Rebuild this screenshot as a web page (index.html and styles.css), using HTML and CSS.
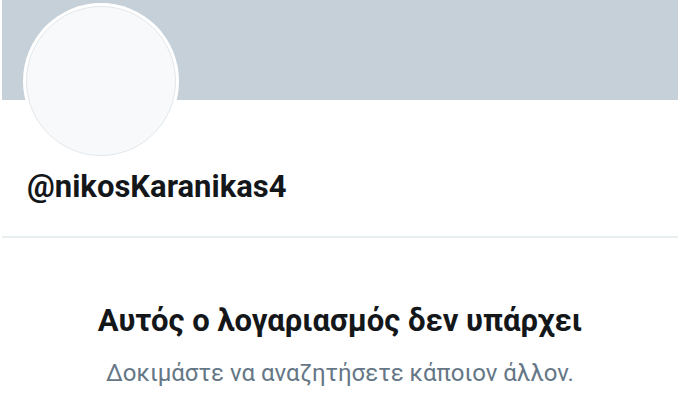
FILE: index.html
```html
<!DOCTYPE html>
<html lang="el">
<head>
    <meta charset="UTF-8">
    <meta name="viewport" content="width=device-width, initial-scale=1.0">
    <title>@nikosKaranikas4</title>
    <link rel="stylesheet" href="styles.css">
</head>
<body>

<div class="profile">
    <div class="banner"></div>
    <div class="avatar-wrap">
        <div class="avatar"></div>
    </div>
    <div class="handle">@nikosKaranikas4</div>
    <hr class="divider">
    <div class="empty">
        <h2>Αυτός ο λογαριασμός δεν υπάρχει</h2>
        <p>Δοκιμάστε να αναζητήσετε κάποιον άλλον.</p>
    </div>
</div>

</body>
</html>
```

FILE: styles.css
```css
/* προφίλ λογαριασμού που δεν υπάρχει */
body {
    margin: 0;
    padding: 0;
    background-color: white;
    font-family: Roboto, "Noto Sans", Arial, sans-serif;
}
.profile {
    width: 676px;
    margin-left: 2px;
}
.banner {
    height: 100px;
    background-color: #c5d0d8;
}
.avatar-wrap {
    width: 150px;
    height: 150px;
    margin: -97px 0 0 21px;
    padding: 3px;
    border-radius: 50%;
    background-color: white;
}
.avatar {
    width: 148px;
    height: 148px;
    border-radius: 50%;
    background-color: #f7f9fa;
    border: 1px solid #e1e8ed;
}
.handle {
    margin: 10px 0 0 25px;
    font-size: 31px;
    font-weight: bold;
    color: #14171a;
    line-height: 36px;
}
.divider {
    margin: 31px 0 0 0;
    border: none;
    border-top: 2px solid #e9eef1;
}
.empty {
    text-align: center;
    padding-top: 65px;
}
.empty h2 {
    margin: 0;
    font-size: 31px;
    font-weight: bold;
    color: #14171a;
    line-height: 36px;
}
.empty p {
    margin: 19px 0 0 0;
    font-size: 24px;
    color: #657786;
    line-height: 30px;
}
```
